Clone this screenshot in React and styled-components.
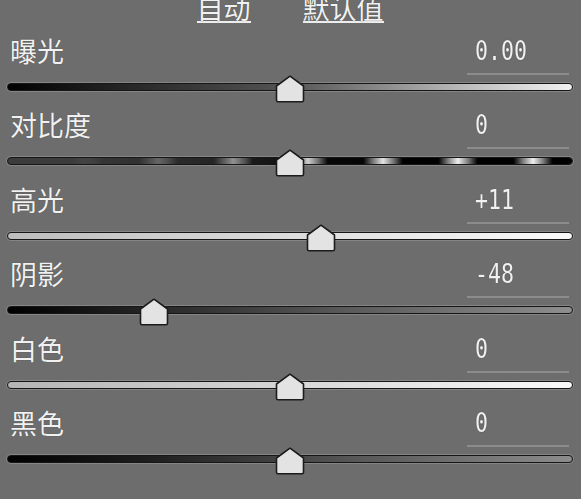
import React from "react";
import styled, { createGlobalStyle, css } from "styled-components";

const Global = createGlobalStyle`
  html, body { margin: 0; padding: 0; background: #6d6d6d; }
  body { width: 581px; height: 499px; overflow: hidden; }
`;

const Panel = styled.div`
  width: 581px;
  height: 499px;
  box-sizing: border-box;
  padding: 0 8px 0 7px;
  background: #6d6d6d;
  font-family: "Noto Sans CJK SC", "Noto Sans", sans-serif;
  color: #f1f1f1;
  overflow: hidden;
`;

const Header = styled.div`
  display: flex;
  justify-content: center;
  gap: 52px;
  height: 22px;
`;

const HeaderLink = styled.span`
  display: block;
  margin-top: -6px;
  font-size: 27px;
  line-height: 27px;
  height: 27px;
  border-bottom: 2px solid #eeeeee;
  text-shadow: 0 0 1px rgba(0, 0, 0, 0.45);
`;

const Row = styled.div`
  height: 74.4px;
  display: flex;
  flex-direction: column;
`;

const TopLine = styled.div`
  height: 53px;
  display: flex;
  justify-content: space-between;
  align-items: flex-start;
`;

const Label = styled.div`
  margin-top: 14px;
  margin-left: 3px;
  font-size: 27px;
  line-height: 30px;
  text-shadow: 0 0 1px rgba(0, 0, 0, 0.45);
`;

const ValueBox = styled.div`
  width: 102px;
  height: 53px;
  box-sizing: border-box;
  margin-right: 4px;
  padding: 15px 0 0 8px;
  border-bottom: 2px solid #8c8c8c;
`;

const ValueText = styled.span`
  display: inline-block;
  font-family: "DejaVu Sans Mono", "Liberation Mono", monospace;
  font-size: 27px;
  line-height: 27px;
  transform: scaleX(0.8);
  transform-origin: left center;
  text-shadow: 0 0 1px rgba(0, 0, 0, 0.5);
`;

const fills = {
  exposure: css`background: linear-gradient(90deg, #000 0%, #1c1c1c 15%, #555 50%, #b8b8b8 80%, #f2f2f2 100%);`,
  contrast: css`
    background: #3c3c3c;
    &::after {
      content: "";
      position: absolute;
      inset: 0;
      border-radius: 4px;
      background: repeating-linear-gradient(
        90deg,
        #000 0px, #000 18px, #777 27px, #f0f0f0 37.5px, #777 48px, #000 57px, #000 75px
      );
      background-position: 37.5px 0;
      -webkit-mask-image: linear-gradient(90deg, rgba(0,0,0,0) 10%, rgba(0,0,0,0.35) 35%, rgba(0,0,0,0.85) 55%, #000 75%);
      mask-image: linear-gradient(90deg, rgba(0,0,0,0) 10%, rgba(0,0,0,0.35) 35%, rgba(0,0,0,0.85) 55%, #000 75%);
    }
  `,
  highlights: css`background: linear-gradient(90deg, #bdbdbd 0%, #dcdcdc 50%, #fafafa 100%);`,
  shadows: css`background: linear-gradient(90deg, #000 0%, #262626 25%, #5a5a5a 60%, #8e8e8e 100%);`,
  whites: css`background: linear-gradient(90deg, #b5b5b5 0%, #d6d6d6 50%, #fafafa 100%);`,
  blacks: css`background: linear-gradient(90deg, #000 0%, #1e1e1e 25%, #555 60%, #8c8c8c 100%);`,
};

const TrackArea = styled.div`
  position: relative;
  height: 21.4px;
`;

const Track = styled.div`
  position: relative;
  margin-top: 8px;
  height: 8px;
  box-sizing: border-box;
  border: 1.5px solid #161616;
  border-radius: 4px;
  box-shadow: 0 0 0 1px #858585;
  overflow: hidden;
  ${(p) => fills[p.$variant]}
`;

const Thumb = styled.svg`
  position: absolute;
  top: 0px;
  width: 30px;
  height: 28px;
  overflow: visible;
`;

const SliderThumb = ({ value }) => {
  const pct = (value + 100) / 2;
  return (
    <Thumb viewBox="0 0 30 28" style={{ left: `calc(${pct}% - 15px)` }}>
      <path
        d="M15 1.2 L28.5 11 L28.5 25.2 Q28.5 26.8 27 26.8 L3 26.8 Q1.5 26.8 1.5 25.2 L1.5 11 Z"
        fill="#e3e3e3"
        stroke="#1c1c1c"
        strokeWidth="1.6"
        strokeLinejoin="round"
      />
    </Thumb>
  );
};

const rows = [
  { label: "曝光", value: 0, text: "0.00", variant: "exposure" },
  { label: "对比度", value: 0, text: "0", variant: "contrast" },
  { label: "高光", value: 11, text: "+11", variant: "highlights" },
  { label: "阴影", value: -48, text: "-48", variant: "shadows" },
  { label: "白色", value: 0, text: "0", variant: "whites" },
  { label: "黑色", value: 0, text: "0", variant: "blacks" },
];

export default function App() {
  return (
    <>
      <Global />
      <Panel>
        <Header>
          <HeaderLink>自动</HeaderLink>
          <HeaderLink>默认值</HeaderLink>
        </Header>
        {rows.map((r) => (
          <Row key={r.label}>
            <TopLine>
              <Label>{r.label}</Label>
              <ValueBox>
                <ValueText>{r.text}</ValueText>
              </ValueBox>
            </TopLine>
            <TrackArea>
              <Track $variant={r.variant} />
              <SliderThumb value={r.value} />
            </TrackArea>
          </Row>
        ))}
      </Panel>
    </>
  );
}
